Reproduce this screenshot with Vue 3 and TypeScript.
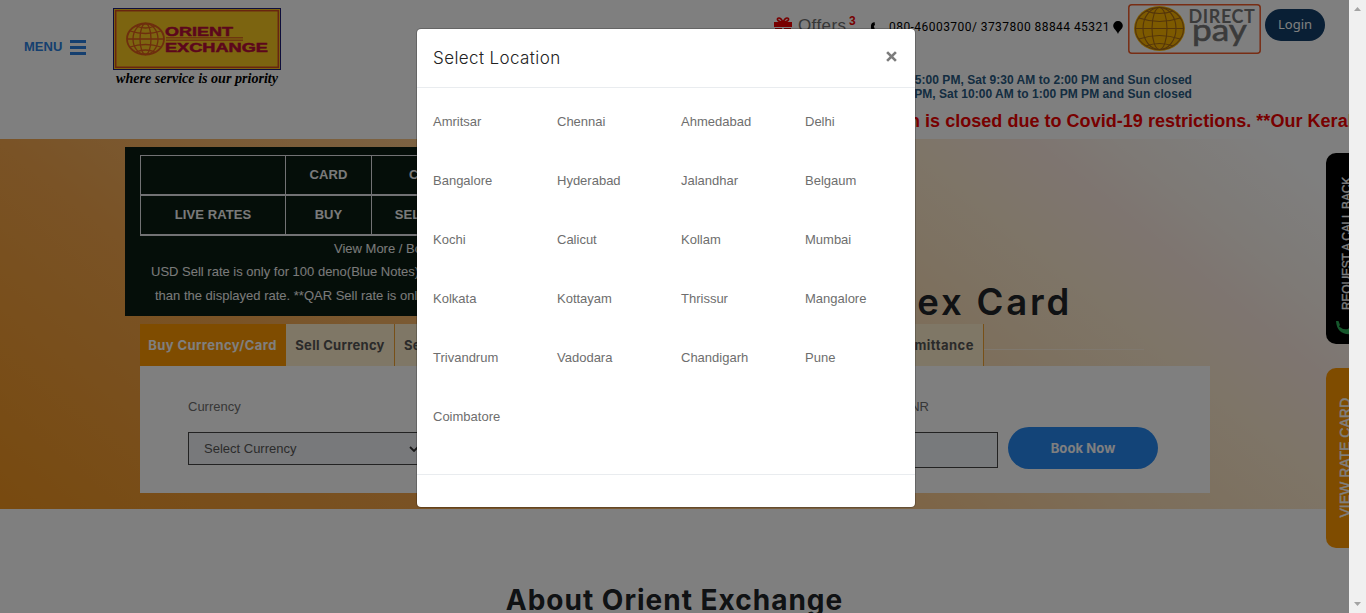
<script setup lang="ts">
interface RateRow {
  id: string
  cells: string[]
}

const locations: string[] = [
  'Amritsar', 'Chennai', 'Ahmedabad', 'Delhi',
  'Bangalore', 'Hyderabad', 'Jalandhar', 'Belgaum',
  'Kochi', 'Calicut', 'Kollam', 'Mumbai',
  'Kolkata', 'Kottayam', 'Thrissur', 'Mangalore',
  'Trivandrum', 'Vadodara', 'Chandigarh', 'Pune',
  'Coimbatore',
]

const rates: RateRow[] = [
  { id: 'head', cells: ['', 'CARD', 'CASH'] },
  { id: 'live', cells: ['LIVE RATES', 'BUY', 'SELL'] },
]
</script>

<template>
  <div class="window">
    <div class="page">
      <header class="header">
        <a class="menu">
          <span>MENU</span>
          <span class="bars"><i></i><i></i><i></i></span>
        </a>
        <svg class="logo" width="170" height="82" viewBox="0 0 170 82">
          <rect x="0.5" y="0.5" width="167" height="61" fill="#f8c820" stroke="#1c1c78" />
          <rect x="2.7" y="2.7" width="162.6" height="56.6" fill="none" stroke="#d24a20" stroke-width="1.5" />
          <g fill="none" stroke="#dc5c1c" stroke-width="1.3">
            <ellipse cx="32.5" cy="31" rx="18.5" ry="15.5" stroke-width="1.8" />
            <ellipse cx="32.5" cy="31" rx="12.5" ry="15.5" />
            <ellipse cx="32.5" cy="31" rx="5.5" ry="15.5" />
            <path d="M14 31h37M17 23q15.500 5 31 0M17 39q15.500-5 31 0M23 18q9.500 4 19 0M23 44q9.500-4 19 0" />
          </g>
          <g class="logo-name" fill="#b80c38" stroke="#b80c38" stroke-width="0.5">
            <text x="52" y="27.500" textLength="68" lengthAdjust="spacingAndGlyphs">ORIENT</text>
            <text x="52" y="43.500" textLength="103" lengthAdjust="spacingAndGlyphs">EXCHANGE</text>
          </g>
          <path d="M53 29.800h77M53 32.200h77" stroke="#c83820" stroke-width="0.9" />
          <text class="tagline" x="3" y="75" textLength="162" lengthAdjust="spacingAndGlyphs">where service is our priority</text>
        </svg>

        <div class="header-right">
          <div class="contact">
            <svg class="gift" width="18" height="17" viewBox="0 0 18 17">
              <path d="M0 5h18v5H0zM1 11h7v6H1zM10 11h7v6h-7z" fill="#f00000" />
              <path d="M9 5C3 5 2 1 5 1q2 0 4 4 2-4 4-4c3 0 2 4-4 4z" fill="none" stroke="#f00000" stroke-width="1.600" />
            </svg>
            <span class="offers">Offers</span><span class="count">3</span>
            <svg class="phone" width="10" height="12" viewBox="0 0 10 12">
              <path d="M2 1 4.500 0 5 3 3.800 4 5 8 7 8 8 11 6 12Q0 9 1 3z" />
            </svg>
            <span class="number">080-46003700/ 3737800 88844 45321</span>
            <svg class="pin" width="10" height="13" viewBox="0 0 10 13">
              <path d="M5 0a4.700 4.700 0 0 1 4.800 4.800C9.800 8 6.500 9 5 13 3.500 9 .2 8 .2 4.800A4.700 4.700 0 0 1 5 0z" />
            </svg>
            <svg class="direct" width="133" height="50" viewBox="0 0 133 50">
              <rect x="0.800" y="0.800" width="131.400" height="48.400" rx="3" fill="none" stroke="#f05a28" stroke-width="1.500" />
              <ellipse cx="31.500" cy="24.500" rx="25.500" ry="22.500" fill="#fab400" />
              <g fill="none" stroke="#a86a14" stroke-width="1.100">
                <ellipse cx="31.500" cy="24.500" rx="24" ry="21" />
                <ellipse cx="31.500" cy="24.500" rx="16.500" ry="21" />
                <ellipse cx="31.500" cy="24.500" rx="7.500" ry="21" />
                <path d="M7 24.500h49M11 14q20.500 7 41 0M11 35q20.500-7 41 0M18 7q13.500 5 27 0M18 42q13.500-5 27 0" />
              </g>
              <text class="direct-word" x="60.500" y="18.500">DIRECT</text>
              <text class="pay-word" x="64" y="37" textLength="55" lengthAdjust="spacingAndGlyphs">pay</text>
            </svg>
            <button class="login">Login</button>
          </div>
          <div class="hours">
            <div>to 5:00 PM, Sat 9:30 AM to 2:00 PM and Sun closed</div>
            <div>PM, Sat 10:00 AM to 1:00 PM PM and Sun closed</div>
          </div>
          <div class="ticker">n is closed due to Covid-19 restrictions. **Our Kerala</div>
        </div>
      </header>

      <section class="hero">
        <div class="top-row">
          <div class="rates">
            <div v-for="row in rates" :key="row.id" class="rate-row">
              <span v-for="(cell, i) in row.cells" :key="i" :class="['cell', 'cell-' + i, row.id]">{{ cell }}</span>
            </div>
            <p class="more">View More / Book</p>
            <p class="note">USD Sell rate is only for 100 deno(Blue Notes)</p>
            <p class="note second">than the displayed rate. **QAR Sell rate is only</p>
          </div>
          <h1 class="headline">ex Card</h1>
        </div>
        <div class="tabs">
          <span class="tab active"><b>Buy Currency/Card</b></span>
          <span class="tab sell"><b>Sell Currency</b></span>
          <span class="tab third"><b>Send</b></span>
          <span class="tab last"><b>Remittance</b></span>
          <i class="rule"></i>
        </div>
        <div class="form">
          <div class="field">
            <label>Currency</label>
            <div class="select">
              <span>Select Currency</span>
              <svg width="10" height="6" viewBox="0 0 10 6"><path d="M1 1l4 4 4-4" fill="none" stroke="#333" stroke-width="1.800" /></svg>
            </div>
          </div>
          <div class="field amount">
            <label>INR</label>
            <div class="input"></div>
          </div>
          <button class="book"><span>Book Now</span></button>
        </div>
      </section>

      <h2 class="about">About Orient Exchange</h2>

      <aside class="side callback">
        <span>REQUEST A CALL BACK</span>
        <svg width="20" height="14" viewBox="0 0 20 14"><path d="M0 0h2.500L4 4l-1 1.500Q7 9 12 8l2-2 5 4-2 3Q1 15 0 0z" fill="#2cae58" /></svg>
      </aside>
      <aside class="side ratecard"><span>VIEW RATE CARD</span></aside>

      <div class="backdrop">
        <div class="modal">
          <div class="modal-head">
            <h5>Select Location</h5>
            <svg class="close" width="11" height="11" viewBox="0 0 10 10"><path d="M1 1l8 8M9 1L1 9" stroke="#7c7c7c" stroke-width="2.400" /></svg>
          </div>
          <div class="modal-body">
            <a v-for="name in locations" :key="name">{{ name }}</a>
          </div>
          <div class="modal-foot"></div>
        </div>
      </div>
    </div>

    <div class="scrollbar">
      <svg width="7" height="4" viewBox="0 0 7 4"><path d="M3.500 0 7 4H0z" fill="#a3a3a3" /></svg>
      <svg width="7" height="4" viewBox="0 0 7 4"><path d="M0 0h7L3.500 4z" fill="#a3a3a3" /></svg>
    </div>
  </div>
</template>

<style>
body {
  margin: 0;
  overflow: hidden;
}
</style>

<style scoped>
* {
  box-sizing: border-box;
}
.window {
  display: flex;
  width: 1366px;
  height: 613px;
  overflow: hidden;
  font-family: "Liberation Sans", Arial, sans-serif;
  font-size: 13px;
  color: #6e6e6e;
}
.page {
  position: relative;
  width: 1349px;
  height: 613px;
  overflow: hidden;
  background: #fff;
}
.scrollbar {
  width: 17px;
  display: flex;
  flex-direction: column;
  align-items: center;
  justify-content: space-between;
  padding: 7px 0;
  background: #f0f0f0;
}
.header {
  display: flex;
  height: 139px;
}
.menu {
  display: flex;
  width: 113px;
  height: 19px;
  margin-top: 37px;
  padding-left: 24px;
  align-items: center;
  color: #2a7ede;
  font-weight: bold;
}
.bars {
  display: grid;
  gap: 3px;
  margin: 2px 0 0 8px;
}
.bars i {
  width: 16px;
  height: 3px;
  background: #2a7ede;
}
.logo {
  margin-top: 8px;
}
.logo-name {
  font: bold 13px "Liberation Sans", Arial, sans-serif;
}
.tagline {
  font: italic bold 14px "Liberation Serif", serif;
  fill: #000;
}
.header-right {
  flex: 1;
  display: flex;
  flex-direction: column;
  overflow: hidden;
}
.contact {
  display: flex;
  height: 72px;
  margin-left: 491px;
  white-space: nowrap;
}
.gift {
  margin-top: 17px;
}
.offers {
  margin: 15px 0 0 6px;
  width: 49px;
  font-size: 17px;
  line-height: 21px;
  letter-spacing: 0.4px;
}
.count {
  width: 10px;
  margin: 14px 0 0 2px;
  font-weight: bold;
  font-size: 12px;
  color: #f00000;
}
.phone {
  margin: 22px 0 0 11px;
}
.number {
  width: 221px;
  margin: 18px 0 0 9px;
  color: #000;
  font: 12px/18px Roboto, sans-serif;
  letter-spacing: 0.45px;
}
.pin {
  margin: 21px 0 0 3px;
}
.direct {
  margin: 4px 0 0 5px;
}
.direct-word {
  font: 700 18px Lato, sans-serif;
  fill: #767676;
  letter-spacing: 0.6px;
}
.pay-word {
  font: 400 30px Lato, sans-serif;
  fill: #767676;
  stroke: #767676;
  stroke-width: 0.6px;
}
.login {
  width: 60px;
  height: 32px;
  margin: 9px 0 0 4px;
  padding: 0 0 2px;
  border: 0;
  border-radius: 16px;
  background: #123e6b;
  color: #fff;
  font: 13px "Noto Sans", sans-serif;
}
.hours {
  width: 909px;
  text-align: right;
  font-size: 12px;
  font-weight: bold;
  line-height: 14px;
  letter-spacing: 0.05px;
  color: #285a82;
  padding-top: 1px;
}
.ticker {
  margin: 9px 0 0 626px;
  color: #f00000;
  font-size: 18px;
  font-weight: bold;
  line-height: 22px;
  letter-spacing: 0.03px;
  white-space: nowrap;
}
.hero {
  height: 370px;
  padding-top: 8px;
  background: linear-gradient(39deg, #f0941f 0%, #f4a64c 25%, #fac88a 50%, #fadcb4 63%, #fceacf 75%, #fdeae0 82%, #fcf4ec 87%, #fff 96%);
}
.top-row {
  display: flex;
  height: 177px;
  padding-left: 125px;
}
.rates {
  width: 500px;
  height: 169px;
  padding: 8px 15px 0;
  background: #0a1c12;
  color: #f4f4f4;
}
.rate-row {
  display: flex;
  height: 40px;
  border: solid #e4e4e8;
  border-width: 1px 0 1px 1px;
  font-weight: bold;
}
.rate-row:nth-child(2) {
  height: 41px;
  border-bottom-width: 2px;
}
.cell {
  width: 86px;
  border-right: 1px solid #e4e4e8;
  text-align: center;
  line-height: 38px;
  letter-spacing: 0.1px;
}
.cell-0 {
  width: 145px;
}
.cell-2.head {
  width: 112px;
}
.cell-2.live {
  width: 80px;
}
.rates p {
  margin: 0;
  white-space: nowrap;
  line-height: 24px;
}
.rates .more {
  padding: 1px 0 0 194px;
}
.rates .note {
  padding-left: 11px;
  margin-top: -1px;
}
.rates .second {
  padding-left: 15px;
  margin-top: 0;
}
.headline {
  width: 447px;
  margin: 131px 0 0;
  text-align: right;
  font: 600 36.500px/48px Inter, sans-serif;
  letter-spacing: 2.800px;
  color: #202428;
}
.tabs {
  display: flex;
  height: 42px;
  padding-left: 140px;
  font-family: Inter, sans-serif;
  font-size: 13px;
  letter-spacing: 0.3px;
  color: #555;
}
.tab {
  display: flex;
  align-items: center;
  justify-content: center;
  width: 109px;
  background: #ffeecc;
  border-right: 1px solid #f0a030;
  white-space: nowrap;
}
.tab b {
  font-weight: 700;
}
.tab.active {
  width: 146px;
  border-right-color: #ff9800;
  background: #ff9800;
  color: #fff;
  letter-spacing: 0.42px;
}
.tab.third {
  justify-content: flex-start;
  width: 200px;
  padding-left: 9px;
}
.tab.last {
  width: 389px;
  justify-content: flex-end;
  padding-right: 9px;
  letter-spacing: 0.5px;
}
.rule {
  width: 160px;
  height: 1px;
  margin-top: 25px;
  background: #fff0dc;
}
.form {
  display: flex;
  width: 1070px;
  height: 127px;
  margin-left: 140px;
  padding-left: 48px;
  background: #fff;
}
.field {
  width: 260px;
  padding-top: 31px;
}
.field label {
  display: block;
  height: 35px;
  line-height: 20px;
}
.select {
  display: flex;
  align-items: center;
  gap: 113px;
  height: 33px;
  padding-left: 15px;
  border: 1px solid #444;
  background: #f0f2f6;
  color: #585858;
}
.amount {
  width: 260px;
  margin-left: 290px;
}
.amount label {
  width: 191px;
  text-align: right;
}
.input {
  height: 36px;
  border: 1px solid #444;
  background: #f0f4f8;
}
.book {
  width: 150px;
  height: 42px;
  margin: 61px 0 0 10px;
  padding: 0;
  border: 0;
  border-radius: 21px;
  background: #2688f0;
  color: #fff;
  font: 700 13px Inter, sans-serif;
  letter-spacing: 0.1px;
}
.about {
  margin: 73px 0 0;
  text-align: center;
  font: 700 28px/36px Inter, sans-serif;
  color: #202428;
  letter-spacing: 1px;
}
.side {
  position: absolute;
  left: 1326px;
  width: 40px;
  border-radius: 10px 0 0 10px;
  color: #fff;
}
.side span {
  writing-mode: vertical-rl;
  transform: rotate(180deg);
  white-space: nowrap;
  position: absolute;
}
.callback {
  top: 153px;
  height: 191px;
  background: #000;
}
.callback span {
  left: 13px;
  top: 24px;
  font-size: 12px;
  line-height: 16px;
  letter-spacing: -0.2px;
  -webkit-text-stroke: 0.3px #fff;
}
.callback svg {
  position: absolute;
  left: 10px;
  top: 168px;
}
.ratecard {
  top: 368px;
  height: 180px;
  background: #ff9800;
}
.ratecard span {
  left: 11px;
  top: 30px;
  font-size: 14px;
  line-height: 16px;
  -webkit-text-stroke: 0.4px #fff;
}
.backdrop {
  position: absolute;
  inset: 0;
  background: rgba(0, 0, 0, 0.5);
}
.modal {
  width: 500px;
  height: 480px;
  margin: 28px 0 0 416px;
  border: 1px solid rgba(0, 0, 0, 0.2);
  border-radius: 5px;
  background: #fff;
  background-clip: padding-box;
}
.modal-head {
  display: flex;
  justify-content: space-between;
  height: 59px;
  padding: 16px 18px 0 16px;
  border-bottom: 1px solid #e9ecef;
}
.modal-head h5 {
  margin: 0;
  font: 300 17px/26px Inter, sans-serif;
  color: #222;
  letter-spacing: 0.4px;
}
.close {
  margin-top: 6px;
}
.modal-body {
  display: grid;
  grid-template-columns: repeat(4, 124px);
  grid-auto-rows: 59px;
  height: 386px;
  padding: 24px 0 0 16px;
  line-height: 20px;
}
.modal-foot {
  border-top: 1px solid #e9ecef;
}
</style>
